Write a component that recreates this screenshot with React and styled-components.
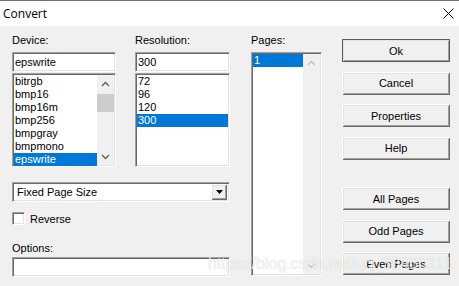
import styled, { createGlobalStyle, css } from "styled-components";

const GlobalStyle = createGlobalStyle`
    html, body {
        margin: 0;
        padding: 0;
        background: #f0f0f0;
    }
`

const sunken = css`
    border: 1px solid;
    border-color: #a0a0a0 #ffffff #ffffff #a0a0a0;
    box-shadow: inset 1px 1px 0 #696969, inset -1px -1px 0 #e3e3e3;
    background: #ffffff;
    box-sizing: border-box;
`

const raised = css`
    background: #f0f0f0;
    box-sizing: border-box;
    box-shadow: inset 1px 1px 0 #ffffff, inset -1px -1px 0 #696969,
        inset 2px 2px 0 #e3e3e3, inset -2px -2px 0 #a0a0a0;
`

const Window = styled.div`
    position: relative;
    width: 459px;
    height: 286px;
    overflow: hidden;
    background: #f0f0f0;
    font-family: "Liberation Sans", Arial, sans-serif;
    font-size: 11px;
    color: #000;
`

const TitleBar = styled.div`
    height: 25px;
    border-top: 1px solid #6f6f6f;
    background: #ffffff;
    display: flex;
    align-items: center;
    justify-content: space-between;
    padding: 0 5px 0 3px;
`

const Title = styled.span`
    font-family: "Open Sans", "Liberation Sans", sans-serif;
    font-size: 12px;
    margin-top: -1px;
`

const Body = styled.div`
    display: flex;
    padding: 8px 0 0 12px;
`

const LeftPane = styled.div`
    width: 218px;
    display: flex;
    flex-direction: column;
`

const TopRow = styled.div`
    display: flex;
    gap: 19px;
`

const Column = styled.div`
    width: ${p => p.$w}px;
    display: flex;
    flex-direction: column;
    margin-left: ${p => p.$ml || 0}px;
`

const Label = styled.div`
    height: 13px;
    line-height: 13px;
    margin-top: ${p => p.$mt || 0}px;
    margin-bottom: ${p => (p.$mb !== undefined ? p.$mb : 5)}px;
    white-space: nowrap;
`

const TextBox = styled.div`
    ${sunken};
    height: ${p => p.$h || 20}px;
    line-height: ${p => (p.$h || 20) - 2}px;
    padding-left: 2px;
    margin-bottom: 1px;
`

const ListBox = styled.div`
    ${sunken};
    height: ${p => p.$h}px;
    padding: 1px;
    display: flex;
`

const Items = styled.div`
    flex: 1;
    display: flex;
    flex-direction: column;
`

const Item = styled.div`
    height: 13px;
    line-height: 13px;
    padding-left: 1px;
    background: ${p => (p.$selected ? "#0078d7" : "transparent")};
    color: ${p => (p.$selected ? "#ffffff" : "#000000")};
`

const ScrollBar = styled.div`
    width: 17px;
    background: #f0f0f0;
    display: flex;
    flex-direction: column;
`

const ArrowBtn = styled.div`
    height: 17px;
    display: flex;
    align-items: center;
    justify-content: center;
`

const Thumb = styled.div`
    height: 18px;
    margin-top: 2px;
    background: #cdcdcd;
`

const Track = styled.div`
    flex: 1;
`

const Combo = styled.div`
    ${sunken};
    margin-top: 15px;
    height: 20px;
    display: flex;
    align-items: center;
    padding: 2px 2px 2px 4px;
`

const ComboText = styled.span`
    flex: 1;
`

const DropBtn = styled.div`
    ${raised};
    width: 16px;
    height: 16px;
    display: flex;
    align-items: center;
    justify-content: center;
`

const CheckRow = styled.div`
    margin-top: 10px;
    display: flex;
    align-items: center;
    gap: 5px;
    height: 13px;
`

const CheckBox = styled.div`
    ${sunken};
    width: 13px;
    height: 13px;
`

const ButtonColumn = styled.div`
    width: 108px;
    margin-left: 20px;
    margin-top: 5px;
    display: flex;
    flex-direction: column;
    gap: 9.5px;
`

const Button = styled.div`
    ${raised};
    height: 23px;
    display: flex;
    align-items: center;
    justify-content: center;
    margin-top: ${p => p.$mt || 0}px;
    ${p => p.$default && css`
        outline: 1px solid #5a5a5a;
        outline-offset: -1px;
    `}
`

const Watermark = styled.div`
    position: absolute;
    left: 208px;
    top: 256px;
    font-family: "Liberation Sans", Arial, sans-serif;
    font-size: 16px;
    line-height: 16px;
    color: rgba(255, 255, 255, 0.8);
    text-shadow: 0 0 1px rgba(0, 0, 0, 0.22);
    white-space: nowrap;
    pointer-events: none;
`

const Chevron = ({ up, color = "#606060" }) => (
    <svg width="9" height="6" viewBox="0 0 9 6">
        <path
            d={up ? "M1 5 L4.5 1.5 L8 5" : "M1 1 L4.5 4.5 L8 1"}
            fill="none"
            stroke={color}
            strokeWidth="1.4"
        />
    </svg>
)

const CloseIcon = () => (
    <svg width="11" height="11" viewBox="0 0 11 11">
        <path d="M0.5 0.5 L10.5 10.5 M10.5 0.5 L0.5 10.5" stroke="#000" strokeWidth="1" />
    </svg>
)

const devices = ["bitrgb", "bmp16", "bmp16m", "bmp256", "bmpgray", "bmpmono", "epswrite"];
const resolutions = ["72", "96", "120", "300"];
const buttons = [
    { label: "Ok", def: true },
    { label: "Cancel" },
    { label: "Properties" },
    { label: "Help" },
    { label: "All Pages", mt: 18 },
    { label: "Odd Pages" },
    { label: "Even Pages" },
];

const App = () => {
    return (
        <>
            <GlobalStyle />
            <Window>
                <TitleBar>
                    <Title>Convert</Title>
                    <CloseIcon />
                </TitleBar>
                <Body>
                    <LeftPane>
                        <TopRow>
                            <Column $w={104}>
                                <Label>Device:</Label>
                                <TextBox>epswrite</TextBox>
                                <ListBox $h={94}>
                                    <Items>
                                        {devices.map(d => (
                                            <Item key={d} $selected={d === "epswrite"}>{d}</Item>
                                        ))}
                                    </Items>
                                    <ScrollBar>
                                        <ArrowBtn><Chevron up /></ArrowBtn>
                                        <Thumb />
                                        <Track />
                                        <ArrowBtn><Chevron /></ArrowBtn>
                                    </ScrollBar>
                                </ListBox>
                            </Column>
                            <Column $w={95}>
                                <Label>Resolution:</Label>
                                <TextBox>300</TextBox>
                                <ListBox $h={94}>
                                    <Items>
                                        {resolutions.map(r => (
                                            <Item key={r} $selected={r === "300"}>{r}</Item>
                                        ))}
                                    </Items>
                                </ListBox>
                            </Column>
                        </TopRow>
                        <Combo>
                            <ComboText>Fixed Page Size</ComboText>
                            <DropBtn>
                                <svg width="7" height="4" viewBox="0 0 7 4">
                                    <path d="M0 0 H7 L3.5 4 Z" fill="#000" />
                                </svg>
                            </DropBtn>
                        </Combo>
                        <CheckRow>
                            <CheckBox />
                            <span>Reverse</span>
                        </CheckRow>
                        <Label $mt={17} $mb={2}>Options:</Label>
                        <TextBox />
                    </LeftPane>
                    <Column $w={71} $ml={21}>
                        <Label>Pages:</Label>
                        <ListBox $h={224}>
                            <Items>
                                <Item $selected>1</Item>
                            </Items>
                            <ScrollBar>
                                <ArrowBtn><Chevron up color="#c0c0c0" /></ArrowBtn>
                                <Track />
                                <ArrowBtn><Chevron color="#c0c0c0" /></ArrowBtn>
                            </ScrollBar>
                        </ListBox>
                    </Column>
                    <ButtonColumn>
                        {buttons.map(b => (
                            <Button key={b.label} $default={b.def} $mt={b.mt}>{b.label}</Button>
                        ))}
                    </ButtonColumn>
                </Body>
                <Watermark>https://blog.csdn.net/qq_38460311</Watermark>
            </Window>
        </>
    );
}

export default App;
